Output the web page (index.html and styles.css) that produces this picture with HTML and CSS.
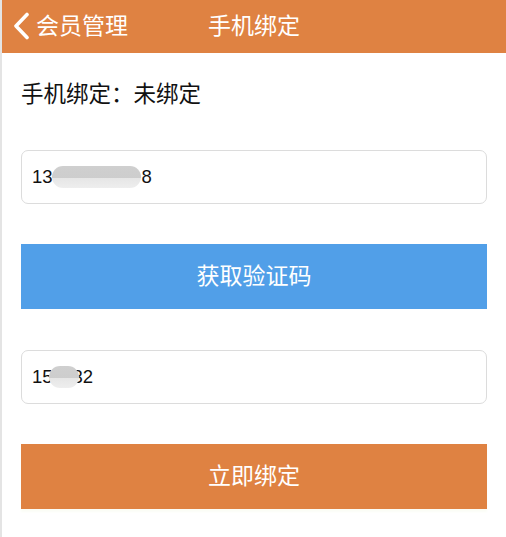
FILE: index.html
```html
<!DOCTYPE html>
<html lang="zh-CN">

<head>
    <meta charset="UTF-8">
    <meta name="viewport" content="width=device-width, initial-scale=1.0">
    <title>手机绑定</title>
    <link rel="stylesheet" href="styles.css">
</head>

<body>

    <div class="header">
        <a class="back" href="#">
            <svg width="18" height="28" viewBox="0 0 18 28">
                <path d="M15 2.5 L4 14 L15 25.5" fill="none" stroke="#fff" stroke-width="3.6" stroke-linecap="round" stroke-linejoin="round"/>
            </svg>
            <span>会员管理</span>
        </a>
        <div class="title">手机绑定</div>
    </div>

    <div class="cont">
        <div class="status">手机绑定：未绑定</div>

        <div class="field phone">13<span class="mask mask-long"></span>8</div>

        <button class="btn btn-blue">获取验证码</button>

        <div class="field code">15<span class="mask mask-short"></span>32</div>

        <button class="btn btn-orange">立即绑定</button>
    </div>

</body>

</html>
```

FILE: styles.css
```css
:root {
    --orange: #df8242;
    --blue: #519fe8;
    --line: #dcdcdc;
}

* {
    margin: 0px;
    padding: 0px;
    box-sizing: border-box;
}

body {
    background-color: #fff;
    border-left: 2px solid #e4e4e4;
    min-height: 537px;
    font-family: "Liberation Sans", "Noto Sans CJK SC", sans-serif;
    color: #111;
}

.header {
    height: 53px;
    padding-bottom: 5px;
    background-color: var(--orange);
    display: flex;
    align-items: center;
    position: relative;
    color: #fff;
}

.back {
    display: flex;
    align-items: center;
    gap: 6px;
    padding-left: 10px;
    color: #fff;
    text-decoration: none;
    font-family: "Noto Sans CJK SC", sans-serif;
    font-size: 23px;
}

.back svg {
    margin-top: 3px;
}

.title {
    position: absolute;
    left: 0;
    right: 0;
    text-align: center;
    font-family: "Noto Sans CJK SC", sans-serif;
    font-size: 23px;
    pointer-events: none;
}

.cont {
    display: flex;
    flex-direction: column;
    padding: 0 19px;
}

.status {
    margin-top: 24px;
    line-height: 30px;
    font-family: "Noto Sans CJK SC", sans-serif;
    font-size: 22.5px;
    color: #111;
}

.field {
    height: 54px;
    border: 1px solid var(--line);
    border-radius: 7px;
    display: flex;
    align-items: center;
    padding-left: 10px;
    font-size: 18.5px;
    color: #111;
    margin-top: 41px;
}

.field.phone {
    margin-top: 43px;
}

.mask {
    display: inline-block;
    height: 22px;
    border-radius: 11px;
    background: linear-gradient(to bottom, #cfcfcf 0%, #cdcdcd 55%, #e6e6e6 56%, #eeeeee 100%);
}

.mask-long {
    width: 89px;
    margin: 0 1px 0 -1px;
}

.mask-short {
    width: 30px;
    margin: 0 -6px 0 -4px;
    position: relative;
}

.btn {
    height: 65px;
    padding-bottom: 5px;
    border: none;
    color: #fff;
    font-family: "Noto Sans CJK SC", sans-serif;
    font-size: 23px;
    margin-top: 40px;
}

.btn-blue {
    background-color: var(--blue);
}

.btn-orange {
    background-color: var(--orange);
    box-shadow: 0 3px 2px #fbfdf6;
}
```
